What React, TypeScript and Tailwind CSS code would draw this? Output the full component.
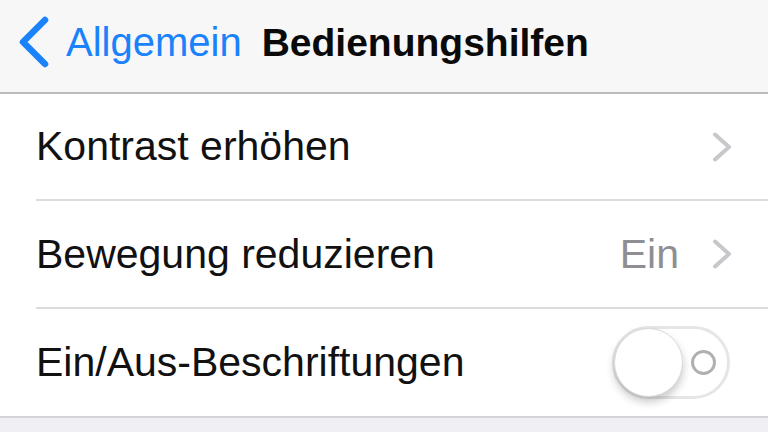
import React from "react";

const Chevron = () => (
  <svg width="20" height="30" viewBox="0 0 20 30" className="shrink-0">
    <polyline
      points="3,2.5 17,15 3,27.5"
      fill="none"
      stroke="#c7c7cc"
      strokeWidth="4"
      strokeLinecap="round"
      strokeLinejoin="round"
    />
  </svg>
);

const BackChevron = () => (
  <svg width="32" height="52" viewBox="0 0 32 52" className="shrink-0">
    <polyline
      points="27,4 5,26 27,48"
      fill="none"
      stroke="#1a82fb"
      strokeWidth="6.5"
      strokeLinecap="round"
      strokeLinejoin="round"
    />
  </svg>
);

const Toggle = () => (
  <div className="relative w-[118px] h-[73px] rounded-full border-[3px] border-[#e6e6e9] bg-white shrink-0">
    <div className="absolute left-[-1px] top-[-1px] w-[69px] h-[69px] rounded-full bg-white border border-[#d9d9dc] shadow-[0_5px_8px_rgba(0,0,0,0.22)]" />
    <div className="absolute left-[76px] top-[21px] w-[25px] h-[25px] rounded-full border-[3px] border-[#b0b0b3]" />
  </div>
);

export default function App() {
  const font = { fontFamily: '"Liberation Sans", Arial, sans-serif' };
  return (
    <div className="w-[768px] h-[432px] overflow-hidden bg-[#efeff4]" style={font}>
      <div className="h-[94px] bg-[#f7f7f7] border-b-2 border-[#bcbcbf] flex items-center pl-[18px] pb-[8px]">
        <BackChevron />
        <span className="ml-[16px] text-[40px] leading-none text-[#1a82fb]">Allgemein</span>
        <span className="ml-[20px] text-[39px] leading-none font-bold text-[#0a0a0a]">Bedienungshilfen</span>
      </div>
      <div className="bg-white">
        <div className="h-[105px] flex items-center pl-[36px] pr-[36px]">
          <span className="flex-1 text-[41px] leading-none text-[#111]">Kontrast erhöhen</span>
          <Chevron />
        </div>
        <div className="ml-[36px] h-[2px] bg-[#dcdce0]" />
        <div className="h-[106px] flex items-center pl-[36px] pr-[36px]">
          <span className="flex-1 text-[41px] leading-none text-[#111]">Bewegung reduzieren</span>
          <span className="text-[41px] leading-none text-[#8e8e93] mr-[33px]">Ein</span>
          <Chevron />
        </div>
        <div className="ml-[36px] h-[2px] bg-[#dcdce0]" />
        <div className="h-[107px] flex items-center pl-[36px] pr-[38px]">
          <span className="flex-1 text-[41px] leading-none text-[#111]">Ein/Aus-Beschriftungen</span>
          <Toggle />
        </div>
      </div>
      <div className="h-[2px] bg-[#d4d4d8]" />
    </div>
  );
}
